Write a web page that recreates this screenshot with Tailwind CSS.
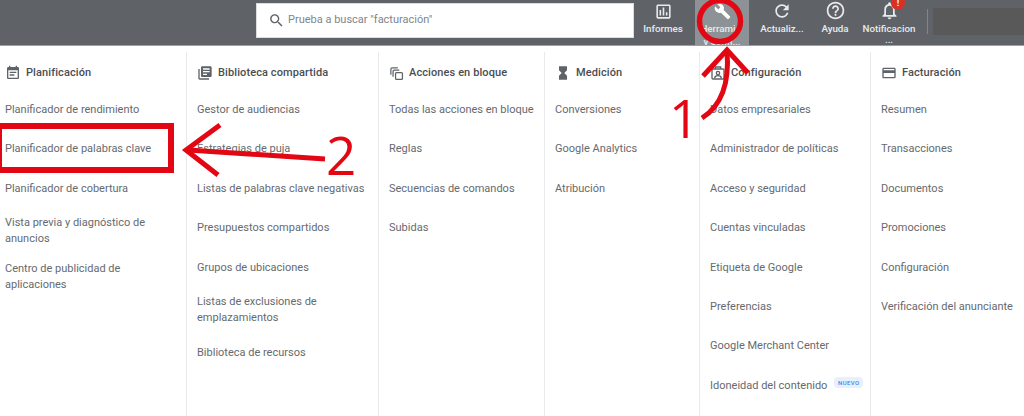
<!DOCTYPE html>
<html lang="es">
<head>
  <meta charset="UTF-8" />
  <title>Herramientas y configuración</title>
  <script src="https://cdn.jsdelivr.net/npm/@tailwindcss/browser@4"></script>
</head>
<body class="relative w-[1024px] h-[416px] overflow-hidden bg-white font-['Roboto',sans-serif] text-[#666a6e]">
  <!-- top bar -->
  <header class="flex h-[46px] bg-[#5f6368] border-b border-[#9aa0a6] pl-[256px] text-white">
    <div class="flex items-center w-[378px] h-[35px] mt-[3px] pl-[11px] bg-white border border-[#dadce0] text-[#80868b] text-[11px]">
      <svg class="w-[17px] h-[17px] mr-[3px] shrink-0" viewBox="0 0 24 24" fill="#5f6368"><path d="M15.5 14h-.79l-.28-.27C15.41 12.59 16 11.11 16 9.5 16 5.91 13.09 3 9.5 3S3 5.91 3 9.5 5.91 16 9.5 16c1.61 0 3.09-.59 4.23-1.57l.27.28v.79l5 4.99L20.49 19l-4.99-5zm-6 0C7.01 14 5 11.99 5 9.5S7.01 5 9.5 5 14 7.01 14 9.5 11.99 14 9.5 14z"/></svg>
      <span>Prueba a buscar "facturación"</span>
    </div>
    <nav class="flex text-[9.750px] font-medium leading-[13px] text-[#e8eaed]">
      <div class="flex flex-col items-center w-[58px] pt-[2px]">
        <svg class="w-[19px] h-[19px]" viewBox="0 0 24 24" fill="#e8eaed"><path d="M19 3H5c-1.1 0-2 .9-2 2v14c0 1.100.9 2 2 2h14c1.100 0 2-.9 2-2V5c0-1.100-.9-2-2-2zm0 16H5V5h14v14zM7 10h2v7H7zm4-3h2v10h-2zm4 6h2v4h-2z"/></svg>
        <span class="mt-[1px]">Informes</span>
      </div>
      <div class="flex flex-col items-center w-[54px] ml-[3px] h-[45px] pt-[3px] bg-[#8d9296] overflow-hidden text-center">
        <svg class="w-[17px] h-[17px] shrink-0" viewBox="0 0 24 24" fill="#fff"><path d="M22.7 19l-9.100-9.100c.9-2.300.4-5-1.500-6.900-2-2-5-2.400-7.400-1.300L9 6 6 9 1.600 4.700C.4 7.100.9 10.100 2.900 12.100c1.900 1.900 4.600 2.400 6.900 1.500l9.100 9.100c.4.4 1 .4 1.400 0l2.300-2.300c.5-.4.5-1.100.1-1.400z"/></svg>
        <span class="mt-[2px] mr-[8px]">Herrami</span>
        <span>y confi...</span>
      </div>
      <div class="flex flex-col items-center w-[50px] ml-[8px] pt-[1px]">
        <svg class="w-[20px] h-[20px]" viewBox="0 0 24 24" fill="#e8eaed"><path d="M17.650 6.350C16.200 4.900 14.210 4 12 4c-4.420 0-7.990 3.580-7.990 8s3.570 8 7.990 8c3.730 0 6.840-2.550 7.730-6h-2.080c-.82 2.330-3.040 4-5.650 4-3.310 0-6-2.690-6-6s2.690-6 6-6c1.660 0 3.140.69 4.220 1.780L13 11h7V4l-2.350 2.350z"/></svg>
        <span class="mt-[1px] whitespace-nowrap">Actualiz...</span>
      </div>
      <div class="flex flex-col items-center w-[40px] ml-[8px]">
        <svg class="w-[21px] h-[21px]" viewBox="0 0 24 24" fill="#e8eaed"><path d="M11 18h2v-2h-2v2zm1-16C6.480 2 2 6.480 2 12s4.480 10 10 10 10-4.480 10-10S17.520 2 12 2zm0 18c-4.410 0-8-3.590-8-8s3.590-8 8-8 8 3.590 8 8-3.590 8-8 8zm0-14c-2.210 0-4 1.790-4 4h2c0-1.100.9-2 2-2s2 .9 2 2c0 2-3 1.750-3 5h2c0-2.250 3-2.500 3-5 0-2.210-1.790-4-4-4z"/></svg>
        <span class="mt-[1px]">Ayuda</span>
      </div>
      <div class="relative flex flex-col items-center w-[56px] ml-[6px] text-center">
        <svg class="w-[21px] h-[21px]" viewBox="0 0 24 24" fill="#e8eaed"><path d="M12 22c1.100 0 2-.9 2-2h-4c0 1.100.9 2 2 2zm6-6v-5c0-3.070-1.630-5.640-4.500-6.320V4c0-.83-.67-1.500-1.500-1.500s-1.500.67-1.500 1.500v.68C7.640 5.360 6 7.920 6 11v5l-2 2v1h16v-1l-2-2zm-2 1H8v-6c0-2.480 1.510-4.500 4-4.500s4 2.020 4 4.500v6z"/></svg>
        <span class="mt-[1px]">Notificacion</span>
        <span class="leading-[10px]">...</span>
        <span class="absolute left-[30px] -top-[4px] w-[14px] h-[14px] rounded-full bg-[#d93025] text-white text-[9px] font-bold leading-[14px]">!</span>
      </div>
    </nav>
    <div class="w-px h-[25px] mt-[9px] ml-[10px] bg-[#80868b]"></div>
    <div class="flex-1 h-[27px] mt-[8px] ml-[5px] bg-[#595959]"></div>
  </header>

  <!-- menu columns -->
  <main class="flex h-[370px] pt-[6px] text-[11px] leading-4">
    <section class="w-[186px] pl-[5px]">
      <h3 class="flex items-center h-[16px] mt-[13px] text-[#4a4e52] font-medium tracking-[0.1px]">
        <svg class="w-[16px] h-[16px] mr-[5px]" viewBox="0 0 24 24" fill="#5f6368"><path d="M17 10H7v2h10v-2zm2-7h-1V1h-2v2H8V1H6v2H5c-1.110 0-1.990.9-1.990 2L3 19c0 1.100.89 2 2 2h14c1.100 0 2-.9 2-2V5c0-1.100-.9-2-2-2zm0 16H5V8h14v11zm-5-5H7v2h7v-2z"/></svg>
        Planificación
      </h3>
      <p class="mt-[21px]">Planificador de rendimiento</p>
      <p class="mt-[23.400px]">Planificador de palabras clave</p>
      <p class="mt-[23.400px]">Planificador de cobertura</p>
      <p class="mt-[18.500px]">Vista previa y diagnóstico de<br>anuncios</p>
      <p class="mt-[13.500px]">Centro de publicidad de<br>aplicaciones</p>
    </section>
    <section class="w-[192px] pl-[10px] border-l border-[#e8eaed]">
      <h3 class="flex items-center h-[16px] mt-[13px] text-[#4a4e52] font-medium tracking-[0.1px]">
        <svg class="w-[16px] h-[16px] mr-[5px]" viewBox="0 0 24 24" fill="#5f6368"><path d="M4 6H2v14c0 1.100.9 2 2 2h14v-2H4V6zm16-4H8c-1.100 0-2 .9-2 2v12c0 1.100.9 2 2 2h12c1.100 0 2-.9 2-2V4c0-1.100-.9-2-2-2zm-1 9H9V9h10v2zm-4 4H9v-2h6v2zm4-8H9V5h10v2z"/></svg>
        Biblioteca compartida
      </h3>
      <p class="mt-[21px]">Gestor de audiencias</p>
      <p class="mt-[23.400px]">Estrategias de puja</p>
      <p class="mt-[23.400px]">Listas de palabras clave negativas</p>
      <p class="mt-[23.400px]">Presupuestos compartidos</p>
      <p class="mt-[23.400px]">Grupos de ubicaciones</p>
      <p class="mt-[18.500px]">Listas de exclusiones de<br>emplazamientos</p>
      <p class="mt-[18.500px]">Biblioteca de recursos</p>
    </section>
    <section class="w-[166px] pl-[10px] border-l border-[#e8eaed]">
      <h3 class="flex items-center h-[16px] mt-[13px] text-[#4a4e52] font-medium tracking-[0.1px]">
        <svg class="w-[15px] h-[15px] mr-[5px]" viewBox="0 0 24 24" fill="none" stroke="#5f6368" stroke-width="2"><path d="M3 14V5c0-1 .5-2 2-2h9M6.500 17V8.500c0-1 1-2 2-2h8"/><rect x="10.500" y="10.500" width="11" height="11" rx="1.500"/></svg>
        Acciones en bloque
      </h3>
      <p class="mt-[21px] whitespace-nowrap">Todas las acciones en bloque</p>
      <p class="mt-[23.400px]">Reglas</p>
      <p class="mt-[23.400px]">Secuencias de comandos</p>
      <p class="mt-[23.400px]">Subidas</p>
    </section>
    <section class="w-[155px] pl-[10px] border-l border-[#e8eaed]">
      <h3 class="flex items-center h-[16px] mt-[13px] text-[#4a4e52] font-medium tracking-[0.1px]">
        <svg class="w-[16px] h-[16px] mr-[5px]" viewBox="0 0 24 24" fill="#5f6368"><path d="M6 2v6h.01L6 8.010 10 12l-4 4 .01.01H6V22h12v-5.990h-.01L18 16l-4-4 4-3.990-.01-.01H18V2H6z"/></svg>
        Medición
      </h3>
      <p class="mt-[21px]">Conversiones</p>
      <p class="mt-[23.400px]">Google Analytics</p>
      <p class="mt-[23.400px]">Atribución</p>
    </section>
    <section class="w-[171px] pl-[10px] border-l border-[#e8eaed]">
      <h3 class="flex items-center h-[16px] mt-[13px] text-[#4a4e52] font-medium tracking-[0.1px]">
        <svg class="w-[16px] h-[16px] mr-[5px]" viewBox="0 0 24 24" fill="none" stroke="#5f6368" stroke-width="2"><rect x="3" y="6" width="18" height="15" rx="1.500"/><path d="M8 6V3h8v3"/><circle cx="12" cy="12" r="2.500"/><path d="M7 20c0-3 2-4 5-4s5 1 5 4"/></svg>
        Configuración
      </h3>
      <p class="mt-[21px]">Datos empresariales</p>
      <p class="mt-[23.400px]">Administrador de políticas</p>
      <p class="mt-[23.400px]">Acceso y seguridad</p>
      <p class="mt-[23.400px]">Cuentas vinculadas</p>
      <p class="mt-[23.400px]">Etiqueta de Google</p>
      <p class="mt-[23.400px]">Preferencias</p>
      <p class="mt-[23.400px]">Google Merchant Center</p>
      <p class="flex mt-[23.300px] whitespace-nowrap">Idoneidad del contenido
        <span class="ml-[7px] -mt-[1px] h-[11px] w-[29px] rounded-sm bg-[#e8f0fe] text-[#4285f4] text-[6px] font-medium text-center leading-[11px] tracking-[0.4px]">NUEVO</span>
      </p>
    </section>
    <section class="flex-1 pl-[10px] border-l border-[#e8eaed]">
      <h3 class="flex items-center h-[16px] mt-[13px] text-[#4a4e52] font-medium tracking-[0.1px]">
        <svg class="w-[16px] h-[16px] mr-[5px]" viewBox="0 0 24 24" fill="#5f6368"><path d="M20 4H4c-1.110 0-1.990.89-1.990 2L2 18c0 1.110.89 2 2 2h16c1.110 0 2-.89 2-2V6c0-1.110-.89-2-2-2zm0 14H4v-6h16v6zm0-10H4V6h16v2z"/></svg>
        Facturación
      </h3>
      <p class="mt-[21px]">Resumen</p>
      <p class="mt-[23.400px]">Transacciones</p>
      <p class="mt-[23.400px]">Documentos</p>
      <p class="mt-[23.400px]">Promociones</p>
      <p class="mt-[23.400px]">Configuración</p>
      <p class="mt-[23.400px] whitespace-nowrap">Verificación del anunciante</p>
    </section>
  </main>

  <!-- red annotations drawn on top of the screenshot -->
  <div class="absolute left-0 top-[123px] w-[174px] h-[50px] border-[6px] border-l-[2px] border-[#e30613]"></div>
  <svg class="absolute left-0 top-0 w-[1024px] h-[416px] pointer-events-none" viewBox="0 0 1024 416" fill="none" stroke="#e30613" stroke-width="5">
    <circle cx="720" cy="21" r="20.500" stroke-width="5.500"/>
    <path d="M702 118C718 108 730 88 727 51"/>
    <path d="M703 76L727 50L748 73"/>
    <path d="M325 159L188 150"/>
    <path d="M220 125L186 150L218 175"/>
  </svg>
  <span class="absolute left-[669px] top-[96px] font-['Open_Sans',sans-serif] text-[53px] leading-[44px] text-[#e30613]">1</span>
  <span class="absolute left-[326px] top-[133px] font-['Open_Sans',sans-serif] text-[53px] leading-[44px] text-[#e30613]">2</span>
</body>
</html>
